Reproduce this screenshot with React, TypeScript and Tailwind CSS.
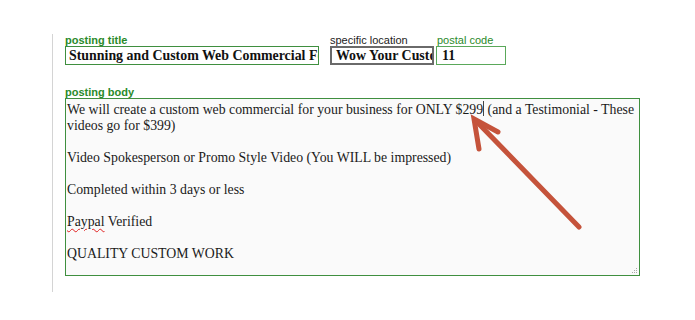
import React from "react";

export default function App() {
  return (
    <div className="relative h-[320px] w-[695px] bg-white pt-[34px] font-['Liberation_Sans',Arial,sans-serif]">
      <div className="ml-[52px] h-[258px] border-l border-[#d4d4d4] pl-[12px]">
        {/* top row */}
        <div className="flex items-end">
          <div className="w-[265px]">
            <div className="text-[11px] leading-[12px] font-semibold text-[#2a8a2a]">posting title</div>
            <div className="h-[19px] w-[254px] overflow-hidden whitespace-nowrap border border-[#3f8f3f] pl-[3px] font-['Liberation_Serif',serif] text-[13.9px] leading-[17px] font-bold text-[#111]">
              Stunning and Custom Web Commercial For Your Business
            </div>
          </div>
          <div className="w-[106px]">
            <div className="text-[11px] leading-[12px] text-[#222]">specific location</div>
            <div className="h-[19px] w-[104px] overflow-hidden whitespace-nowrap border-2 border-[#6a6a6a] pl-[4px] font-['Liberation_Serif',serif] text-[13.9px] leading-[15px] font-bold text-[#111]">
              Wow Your Customers
            </div>
          </div>
          <div>
            <div className="pl-[1px] text-[11px] leading-[12px] text-[#2a8a2a]">postal code</div>
            <div className="h-[19px] w-[70px] border border-[#5aa85a] pl-[5px] font-['Liberation_Serif',serif] text-[13.9px] leading-[17px] font-bold text-[#111]">
              11
            </div>
          </div>
        </div>

        {/* body */}
        <div className="mt-[21px] text-[11px] leading-[12px] font-semibold text-[#2a8a2a]">posting body</div>
        <div className="relative h-[178px] w-[575px] border border-[#3f8f3f] bg-[#fafafa] font-['Liberation_Serif',serif] text-[13.8px] leading-[16px] text-[#1a1a1a]">
          <div className="pl-[1px]">
            <div className="whitespace-nowrap">
              We will create a custom web commercial for your business for ONLY $299
              <span className="inline-block h-[15px] w-px translate-y-[2px] bg-[#444]" />
              <span> (and a Testimonial - These</span>
            </div>
            <div>videos go for $399)</div>
            <div className="h-[16px]" />
            <div>Video Spokesperson or Promo Style Video (You WILL be impressed)</div>
            <div className="h-[16px]" />
            <div>Completed within 3 days or less</div>
            <div className="h-[16px]" />
            <div>
              <span className="underline decoration-wavy decoration-[#e02020] decoration-1 underline-offset-2">Paypal</span> Verified
            </div>
            <div className="h-[16px]" />
            <div>QUALITY CUSTOM WORK</div>
          </div>
          {/* resize grip */}
          <svg className="absolute bottom-[1px] right-[1px]" width="7" height="7" viewBox="0 0 7 7">
            <rect x="5" y="1" width="1" height="1" fill="#aaa" />
            <rect x="3" y="3" width="1" height="1" fill="#aaa" />
            <rect x="5" y="3" width="1" height="1" fill="#aaa" />
            <rect x="1" y="5" width="1" height="1" fill="#aaa" />
            <rect x="3" y="5" width="1" height="1" fill="#aaa" />
            <rect x="5" y="5" width="1" height="1" fill="#aaa" />
          </svg>
        </div>
      </div>

      {/* annotation arrow */}
      <svg className="absolute left-0 top-0" width="695" height="320" viewBox="0 0 695 320">
        <line x1="579" y1="227" x2="478" y2="123" stroke="#c5533b" strokeWidth="5" strokeLinecap="round" />
        <polyline
          points="479,149 474,119 498,132"
          fill="none"
          stroke="#c5533b"
          strokeWidth="5"
          strokeLinecap="round"
          strokeLinejoin="miter"
        />
      </svg>
    </div>
  );
}
